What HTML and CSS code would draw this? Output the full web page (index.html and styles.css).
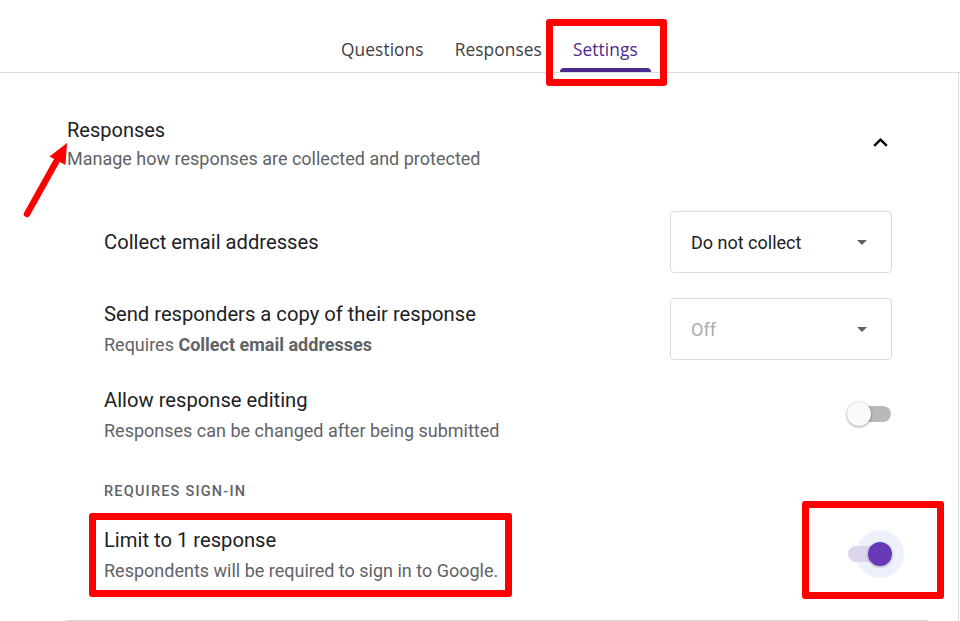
FILE: index.html
```html
<!DOCTYPE html>
<html lang="en">
<head>
<meta charset="utf-8">
<title>Settings</title>
<link rel="stylesheet" href="styles.css">
</head>
<body>
<div class="page">
  <header class="tabbar">
    <nav class="tabs">
      <div class="tab"><span class="tab-label">Questions</span><span class="tab-line"></span></div>
      <div class="tab"><span class="tab-label">Responses</span><span class="tab-line"></span></div>
      <div class="tab active"><span class="tab-label">Settings</span><span class="tab-line"></span></div>
    </nav>
  </header>

  <main class="card">
    <section class="section">
      <div class="section-head">
        <div class="section-text">
          <div class="section-title">Responses</div>
          <div class="section-sub">Manage how responses are collected and protected</div>
        </div>
        <svg class="chevron" width="15" height="9" viewBox="0 0 15 9"><path d="M1.2 7.8 L7.5 1.6 L13.8 7.8" fill="none" stroke="#000" stroke-width="2.4"/></svg>
      </div>

      <div class="row row-1">
        <div class="row-text">
          <div class="row-title">Collect email addresses</div>
        </div>
        <div class="select">
          <span class="select-value">Do not collect</span>
          <span class="caret"></span>
        </div>
      </div>

      <div class="row row-2">
        <div class="row-text">
          <div class="row-title">Send responders a copy of their response</div>
          <div class="row-sub">Requires <b>Collect email addresses</b></div>
        </div>
        <div class="select disabled">
          <span class="select-value">Off</span>
          <span class="caret"></span>
        </div>
      </div>

      <div class="row row-3">
        <div class="row-text">
          <div class="row-title">Allow response editing</div>
          <div class="row-sub">Responses can be changed after being submitted</div>
        </div>
        <div class="toggle off"><span class="track"></span><span class="thumb"></span></div>
      </div>

      <div class="group-label">REQUIRES SIGN-IN</div>

      <div class="row row-4">
        <div class="row-text">
          <div class="row-title">Limit to 1 response</div>
          <div class="row-sub">Respondents will be required to sign in to Google.</div>
        </div>
        <div class="toggle on"><span class="halo"></span><span class="track"></span><span class="thumb"></span></div>
      </div>

      <div class="divider"></div>
    </section>
  </main>

  <div class="mark mark-tab"></div>
  <div class="mark mark-limit"></div>
  <div class="mark mark-toggle"></div>
  <svg class="arrow" width="80" height="90" viewBox="0 0 80 90">
    <line x1="27" y1="74" x2="56" y2="22" stroke="#ff0000" stroke-width="6.5" stroke-linecap="round"/>
    <polygon points="67,3 49.5,16.5 65.5,25" fill="#ff0000"/>
  </svg>
</div>
</body>
</html>
```

FILE: styles.css
```css
* { box-sizing: border-box; }

html, body {
  margin: 0;
  padding: 0;
  background: #ffffff;
}

body {
  font-family: Roboto, "Liberation Sans", Arial, sans-serif;
  color: #202124;
  width: 960px;
  height: 621px;
  overflow: hidden;
}

.page {
  position: relative;
  width: 960px;
  height: 621px;
}

/* Tabs */
.tabbar {
  height: 73px;
  border-bottom: 1px solid #dadce0;
}

.tabs {
  display: flex;
  align-items: flex-end;
  height: 72px;
  padding-left: 328px;
  gap: 5px;
}

.tab {
  display: flex;
  flex-direction: column;
  align-items: stretch;
  padding: 0 13px;
}

.tab-label {
  font-family: "Open Sans", Roboto, sans-serif;
  font-size: 17.3px;
  font-weight: 500;
  line-height: 24px;
  color: #3c4043;
  margin-bottom: 6px;
  letter-spacing: 0.1px;
}

.tab-line {
  display: block;
  height: 4px;
  margin: 0 -13px;
  border-radius: 4px 4px 0 0;
  background: transparent;
}

.tab.active .tab-label { color: #4a2a8c; }
.tab.active .tab-line { background: #4a2a8c; }

/* Card */
.card {
  width: 959px;
  height: 548px;
  border-right: 1px solid #dadce0;
}

.section {
  padding-left: 67px;
  padding-top: 45px;
}

.section-head {
  display: flex;
  align-items: center;
  justify-content: space-between;
  padding-right: 70px;
}

.section-title {
  font-size: 20px;
  line-height: 24px;
  color: #202124;
}

.section-sub {
  font-size: 18px;
  line-height: 24px;
  margin-top: 5px;
  color: #5f6368;
}

.chevron {
  display: block;
  margin-top: -4px;
}

/* Rows */
.row {
  display: flex;
  align-items: center;
  justify-content: space-between;
  padding-left: 37px;
  padding-right: 66px;
}

.row-1 { margin-top: 40px; }
.row-2 { margin-top: 25px; }
.row-3 { margin-top: 28px; }
.row-4 { margin-top: 26px; }

.row-title {
  font-size: 20.2px;
  line-height: 24px;
  color: #202124;
}

.row-sub {
  font-size: 18px;
  line-height: 24px;
  margin-top: 7px;
  color: #5f6368;
}

.row-sub b {
  font-weight: 700;
  color: #5f6368;
}

.group-label {
  margin-top: 39px;
  padding-left: 37px;
  font-size: 14.5px;
  font-weight: 500;
  line-height: 20px;
  letter-spacing: 1.2px;
  color: #5f6368;
}

/* Select */
.select {
  width: 222px;
  height: 62px;
  border: 1px solid #dadce0;
  border-radius: 4px;
  display: flex;
  align-items: center;
  justify-content: space-between;
  padding: 0 24px 0 20px;
}

.select-value {
  font-size: 18px;
  color: #202124;
}

.select.disabled .select-value { color: #a8abb0; }

.caret {
  width: 0;
  height: 0;
  border-left: 5.5px solid transparent;
  border-right: 5.5px solid transparent;
  border-top: 5.5px solid #5f6368;
  margin-top: 1px;
}

/* Toggles */
.toggle {
  position: relative;
  width: 44px;
  height: 26px;
  margin-right: 1px;
}

.toggle.off { margin-top: -4px; }
.toggle.on { margin-top: -3px; }

.toggle .track {
  position: absolute;
  left: 1px;
  right: 0;
  top: 5px;
  height: 16px;
  border-radius: 8px;
  background: #b9b9b9;
}

.toggle .thumb {
  position: absolute;
  top: 1px;
  width: 24px;
  height: 24px;
  border-radius: 50%;
}

.toggle.off .thumb {
  left: 0;
  background: #fafafa;
  box-shadow: 0 1px 3px rgba(0, 0, 0, 0.35), 0 0 1px rgba(0, 0, 0, 0.2);
}

.toggle.on .track { background: #ddd4ee; right: 4px; }

.toggle.on .thumb {
  left: 21px;
  background: #673ab7;
  box-shadow: 0 1px 3px rgba(0, 0, 0, 0.3);
}

.toggle.on .halo {
  position: absolute;
  left: 9px;
  top: -11px;
  width: 48px;
  height: 48px;
  border-radius: 50%;
  background: #edf1fb;
}

.divider {
  margin-top: 37px;
  margin-left: -1px;
  width: 862px;
  height: 1px;
  background: #dadce0;
}

/* Annotations */
.mark {
  position: absolute;
  border: 7px solid #ff0000;
  border-radius: 3px;
}

.mark-tab { left: 546px; top: 19px; width: 121px; height: 67px; }
.mark-limit { left: 89px; top: 513px; width: 423px; height: 84px; }
.mark-toggle { left: 802px; top: 501px; width: 142px; height: 98px; }

.arrow {
  position: absolute;
  left: 0;
  top: 140px;
}
```
